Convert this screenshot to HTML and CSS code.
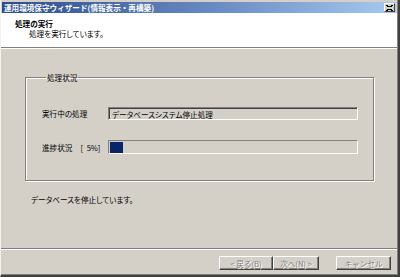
FILE: index.html
```html
<!DOCTYPE html>
<html lang="ja">
  <head>
    <meta charset="UTF-8" />
    <title>運用環境保守ウィザード</title>
    <link rel="stylesheet" href="styles.css">
  </head>
  <body>
    <div class="window">
      <div class="titleBar">
        <span class="titleText">運用環境保守ウィザード(情報表示・再構築)</span>
        <span class="closeBtn">
          <svg width="7" height="6" viewBox="0 0 7 6">
            <path d="M0 0h2v1h3V0h2v1H6v1H5v2h1v1h1v1H5V5H2v1H0V5h1V4h1V2H1V1H0z M2 2h3v2H2z" fill="#000" fill-rule="evenodd"/>
          </svg>
        </span>
      </div>
      <div class="header">
        <div class="headTitle">処理の実行</div>
        <div class="headSub">処理を実行しています。</div>
      </div>
      <div class="content">
        <fieldset class="group">
          <legend>処理状況</legend>
          <div class="row rowFirst">
            <span class="label">実行中の処理</span>
            <div class="field">データベースシステム停止処理</div>
          </div>
          <div class="row">
            <span class="label">進捗状況<span class="pct">[ 5%]</span></span>
            <div class="progress"><div class="chunk"></div></div>
          </div>
        </fieldset>
        <div class="status">データベースを停止しています。</div>
      </div>
      <div class="footer">
        <div class="btnGroup">
          <button class="btn btnBack" disabled>&lt; 戻る(B)</button>
          <button class="btn btnNext" disabled>次へ(N) &gt;</button>
        </div>
        <button class="btn btnCancel" disabled>キャンセル</button>
      </div>
    </div>
  </body>
</html>
```

FILE: styles.css
```css
body {
  margin: 0;
  background-color: #d4d0c8;
  font-family: "Noto Sans CJK JP", sans-serif;
  font-size: 7.6px;
  line-height: 9px;
  font-feature-settings: "palt";
  color: #000;
}
.window {
  width: 400px;
  height: 277px;
  box-sizing: border-box;
  border-left: 1px solid #f4f2ee;
  border-right: 2px solid #404040;
  border-bottom: 2px solid #404040;
  box-shadow: inset -1px -1px 0 #808080;
  display: flex;
  flex-direction: column;
}
.titleBar {
  height: 11px;
  margin: 2px 2px 0 1px;
  background: linear-gradient(to right, #2d4c8e, #6a8cc4 55%, #a6caf0);
  display: flex;
  align-items: center;
  justify-content: space-between;
  padding-left: 2px;
}
.titleText {
  color: #fff;
  font-weight: bold;
  white-space: nowrap;
  font-feature-settings: normal;
}
.closeBtn {
  width: 9px;
  height: 7px;
  margin-right: 1px;
  background-color: #d4d0c8;
  border: 1px solid;
  border-color: #fff #404040 #404040 #fff;
  display: flex;
  align-items: center;
  justify-content: center;
}
.header {
  height: 35px;
  box-sizing: border-box;
  background-color: #fff;
  padding: 6px 0 0 14px;
  border-bottom: 1px solid #808080;
  box-shadow: 0 1px 0 #fff;
  margin-right: 1px;
}
.headTitle {
  font-weight: bold;
  font-feature-settings: normal;
}
.headSub {
  margin-top: 1px;
  padding-left: 14px;
}
.content {
  flex: 1;
  padding: 24px 24px 0 24px;
  margin-top: 1px;
}
.group {
  margin: 0;
  padding: 0 15px 0 16px;
  height: 108px;
  box-sizing: border-box;
  border: 1px solid #808080;
  box-shadow: inset 1px 1px 0 #fff, 1px 1px 0 #fff;
}
.group legend {
  padding: 0 1px;
  margin-left: 4px;
}
.row {
  display: grid;
  grid-template-columns: 66px 1fr;
  align-items: center;
  margin-top: 20px;
}
.rowFirst {
  margin-top: 25px;
}
.label {
  white-space: nowrap;
}
.pct {
  margin-left: 8px;
  word-spacing: 2px;
}
.field {
  height: 13px;
  box-sizing: border-box;
  border: 1px solid;
  border-color: #808080 #fff #fff #808080;
  box-shadow: inset 1px 1px 0 #404040;
  padding: 2px 0 0 3px;
  line-height: 9px;
  white-space: nowrap;
  overflow: hidden;
}
.progress {
  height: 14px;
  box-sizing: border-box;
  border: 1px solid;
  border-color: #808080 #fff #fff #808080;
  padding: 1px;
}
.chunk {
  width: 13px;
  height: 11px;
  background-color: #0a246a;
}
.status {
  margin: 14px 0 0 6px;
}
.footer {
  height: 27px;
  box-sizing: border-box;
  border-top: 1px solid #808080;
  box-shadow: inset 0 1px 0 #fff;
  margin-right: 1px;
  padding: 7px 6px 0 0;
  display: flex;
  justify-content: flex-end;
  align-items: flex-start;
}
.btnGroup {
  display: flex;
  margin-right: 17px;
}
.btn {
  height: 14px;
  box-sizing: border-box;
  padding: 0;
  margin: 0;
  background-color: #d4d0c8;
  border: 1px solid;
  border-color: #fff #404040 #404040 #fff;
  box-shadow: inset -1px -1px 0 #808080;
  font-family: inherit;
  font-size: 7.6px;
  line-height: 9px;
  color: #808080;
  text-shadow: 1px 1px 0 #fff;
}
.btnBack {
  width: 54px;
}
.btnNext {
  width: 46px;
}
.btnCancel {
  width: 55px;
}
```
